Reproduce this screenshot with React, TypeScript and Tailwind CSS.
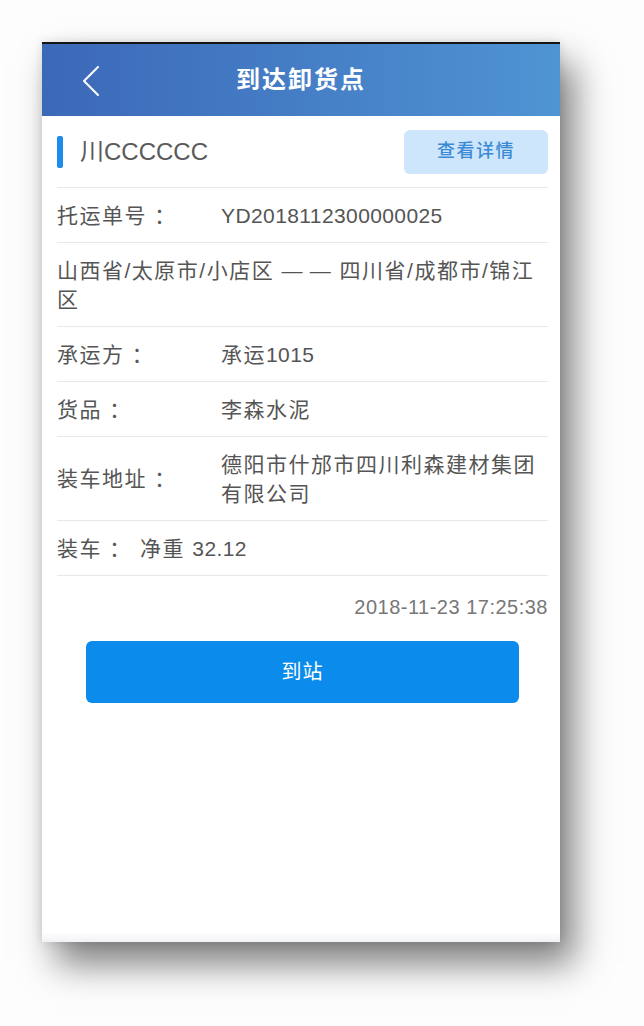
function BackIcon() {
  return (
    <svg width="18" height="32" viewBox="0 0 18 32" fill="none">
      <polyline points="16,2 2,16 16,30" stroke="white" strokeWidth="2" strokeLinecap="round" strokeLinejoin="round" />
    </svg>
  );
}

function Label({ text, width = "w-[164px]" }: { text: string; width?: string }) {
  return (
    <div className={`${width} shrink-0`}>
      {text}
      <span
        className="ml-[2px] inline-block h-[29px] align-top leading-[29px]"
        style={{ fontFamily: '"Noto Sans CJK JP", sans-serif' }}
      >
        ：
      </span>
    </div>
  );
}

function Latin({ children }: { children: React.ReactNode }) {
  return <span className="tracking-[0.4px]">{children}</span>;
}

export default function App() {
  return (
    <div
      className="h-[1026px] w-[644px] bg-[#fdfdfd] pl-[42px] pt-[42px]"
      style={{ fontFamily: '"Liberation Sans", "Noto Sans CJK SC", sans-serif' }}
    >
      <div className="flex h-[900px] w-[518px] flex-col border-t-2 border-[#151515] bg-white shadow-[14px_22px_34px_rgba(0,0,0,0.5),0_0_10px_rgba(0,0,0,0.12)]">
        <header className="grid h-[72px] shrink-0 grid-cols-[80px_1fr_80px] items-center bg-linear-to-r from-[#3c68b8] to-[#4f94d3]">
          <div className="pl-[40px] pt-[1px]">
            <BackIcon />
          </div>
          <h1 className="text-center text-[24px] font-bold tracking-[2px] text-white">到达卸货点</h1>
          <div />
        </header>

        <div className="flex flex-1 flex-col pl-[15px] pr-[12px] text-[21px] leading-[29px] tracking-[1.5px] text-[#555]">
          <div className="flex h-[72px] shrink-0 items-center border-b border-[#e6e8eb]">
            <div className="h-[32px] w-[6px] rounded-[2px] bg-[#1b8cec]" />
            <div className="ml-[17px] text-[24px] tracking-normal text-[#5a5a5a]">川CCCCCC</div>
            <button className="ml-auto h-[44px] w-[144px] rounded-[6px] bg-[#cde6fb] text-[18px] font-medium tracking-[1.5px] text-[#3a8ad6]">
              查看详情
            </button>
          </div>

          <div className="flex items-center border-b border-[#e6e8eb] py-[12.5px]">
            <Label text="托运单号" />
            <div className="flex-1">
              <Latin>YD2018112300000025</Latin>
            </div>
          </div>

          <div className="border-b border-[#e6e8eb] py-[12.5px]">
            {"山西省/太原市/小店区 —\u2009— 四川省/成都市/锦江区"}
          </div>

          <div className="flex items-center border-b border-[#e6e8eb] py-[12.5px]">
            <Label text="承运方" />
            <div className="flex-1">
              承运<Latin>1015</Latin>
            </div>
          </div>

          <div className="flex items-center border-b border-[#e6e8eb] py-[12.5px]">
            <Label text="货品" />
            <div className="flex-1">李森水泥</div>
          </div>

          <div className="flex items-center border-b border-[#e6e8eb] py-[12.5px]">
            <Label text="装车地址" />
            <div className="flex-1">德阳市什邡市四川利森建材集团有限公司</div>
          </div>

          <div className="flex items-center border-b border-[#e6e8eb] py-[12.5px]">
            <Label text="装车" width="w-[83px]" />
            <div className="flex-1">
              净重 <Latin>32.12</Latin>
            </div>
          </div>

          <div className="mt-[17px] text-right text-[20px] tracking-[0.5px] text-[#777]">2018-11-23 17:25:38</div>

          <button className="mx-auto mt-[19px] h-[62px] w-[433px] shrink-0 rounded-[6px] bg-[#0b8cec] text-[20px] tracking-[1px] text-white">
            到站
          </button>
        </div>
        <div className="h-[10px] shrink-0 bg-linear-to-b from-white to-[#f1f2f5]" />
      </div>
    </div>
  );
}
